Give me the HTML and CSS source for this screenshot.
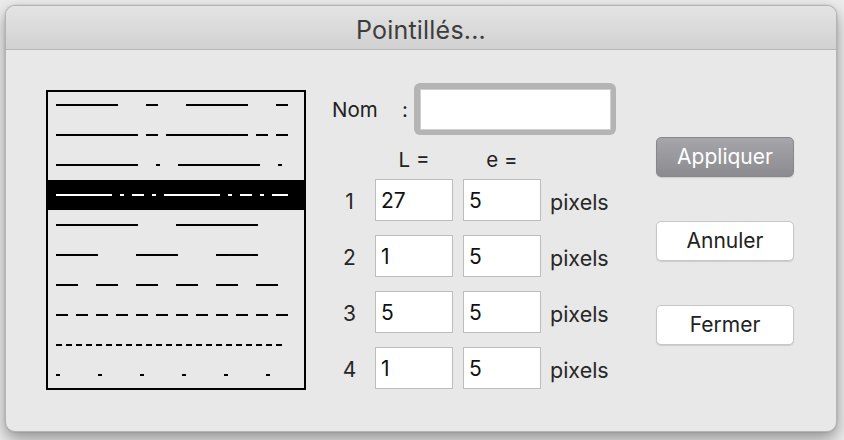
FILE: index.html
```html
<!DOCTYPE html>
<html lang="fr">
<head>
<meta charset="utf-8">
<title>Pointillés</title>
<link rel="stylesheet" href="styles.css">
</head>
<body>
<div class="window">
  <div class="titlebar">Pointillés...</div>
  <div class="content">
    <div class="list">
      <div class="rows">
        <div class="row"><svg class="dash" width="256" height="2"><line x1="9" y1="1" x2="239" y2="1" stroke-dasharray="60 30 10 30"/></svg></div>
        <div class="row"><svg class="dash" width="256" height="2"><line x1="9" y1="1" x2="239" y2="1" stroke-dasharray="80 10 10 10"/></svg></div>
        <div class="row"><svg class="dash" width="256" height="2"><line x1="9" y1="1" x2="239" y2="1" stroke-dasharray="80 20 2 20"/></svg></div>
        <div class="row selected"><svg class="dash" width="256" height="2"><line x1="9" y1="1" x2="239" y2="1" stroke-dasharray="54 10 2 10 10 10 2 10"/></svg></div>
        <div class="row"><svg class="dash" width="256" height="2"><line x1="9" y1="1" x2="239" y2="1" stroke-dasharray="80 40"/></svg></div>
        <div class="row"><svg class="dash" width="256" height="2"><line x1="9" y1="1" x2="239" y2="1" stroke-dasharray="40 40"/></svg></div>
        <div class="row"><svg class="dash" width="256" height="2"><line x1="9" y1="1" x2="239" y2="1" stroke-dasharray="20 20"/></svg></div>
        <div class="row"><svg class="dash" width="256" height="2"><line x1="9" y1="1" x2="239" y2="1" stroke-dasharray="10 10"/></svg></div>
        <div class="row"><svg class="dash" width="256" height="2"><line x1="9" y1="1" x2="239" y2="1" stroke-dasharray="4 6"/></svg></div>
        <div class="row"><svg class="dash" width="256" height="2"><line x1="9" y1="1" x2="239" y2="1" stroke-dasharray="2 40"/></svg></div>
      </div>
    </div>

    <div class="form">
      <div class="nom-row">
        <span class="nom-label">Nom</span><span class="colon">:</span>
        <div class="ring"><div class="nom-field"></div></div>
      </div>
      <div class="hdr-row"><span class="hdr">L =</span><span class="hdr">e =</span></div>
      <div class="grid">
        <span class="num">1</span><div class="field">27</div><div class="field">5</div><span class="unit">pixels</span>
        <span class="num">2</span><div class="field">1</div><div class="field">5</div><span class="unit">pixels</span>
        <span class="num">3</span><div class="field">5</div><div class="field">5</div><span class="unit">pixels</span>
        <span class="num">4</span><div class="field">1</div><div class="field">5</div><span class="unit">pixels</span>
      </div>
    </div>

    <div class="buttons">
      <div class="btn primary">Appliquer</div>
      <div class="btn">Annuler</div>
      <div class="btn">Fermer</div>
    </div>
  </div>
</div>
</body>
</html>
```

FILE: styles.css
```css
* { box-sizing: border-box; }

html, body {
  margin: 0;
  padding: 0;
}

body {
  width: 844px;
  height: 440px;
  background: #ececec;
  font-family: "Inter", "Liberation Sans", sans-serif;
  color: #222;
  overflow: hidden;
}

.window {
  margin: 5px 0 0 5px;
  width: 832px;
  height: 427px;
  border-radius: 10px;
  background: #e8e8e8;
  border: 1px solid #b4b4b4;
  box-shadow: 0 7px 16px rgba(0, 0, 0, 0.38), 0 0 2px rgba(0, 0, 0, 0.18);
  overflow: hidden;
}

.titlebar {
  height: 44px;
  background: linear-gradient(#e4e4e4, #d1d1d1);
  border-bottom: 1px solid #b6b6b6;
  text-align: center;
  font-size: 25px;
  line-height: 48px;
  color: #3d3d3d;
  letter-spacing: 0.2px;
}

.content {
  display: flex;
  align-items: flex-start;
  padding: 33px 0 0 40px;
}

/* list of dash styles */
.list {
  margin-top: 7px;
  width: 260px;
  height: 300px;
  border: 2px solid #000;
  overflow: hidden;
}

.rows {
  margin-top: -2px;
}

.row {
  height: 30px;
  display: flex;
  align-items: center;
}

.dash {
  display: block;
}

.dash line {
  stroke: #000;
  stroke-width: 2;
  stroke-linecap: square;
}

.row.selected {
  background: #000;
}

.row.selected .dash line {
  stroke: #fff;
}

/* form */
.form {
  margin-left: 26px;
  width: 284px;
  font-size: 20.5px;
}

.nom-row {
  display: flex;
  align-items: center;
  height: 52px;
}

.nom-label {
  width: 70px;
  padding-top: 1px;
}

.colon {
  width: 12px;
  padding-top: 1px;
}

.ring {
  width: 202px;
  height: 52px;
  padding: 6px 5px 5px 6px;
  background: #b4b4b4;
  border-radius: 6px;
}

.nom-field {
  width: 100%;
  height: 100%;
  background: #fff;
  border: 1px solid #cfcfcf;
}

.hdr-row {
  display: flex;
  gap: 10px;
  height: 44px;
  padding: 13px 0 0 43px;
  line-height: 24px;
}

.hdr {
  width: 78px;
  text-align: center;
}

.grid {
  display: grid;
  grid-template-columns: 33px 78px 78px auto;
  grid-auto-rows: 42px;
  column-gap: 10px;
  row-gap: 14px;
  align-items: center;
}

.num {
  text-align: center;
  padding-top: 3px;
  padding-left: 2px;
  font-size: 21px;
  color: #262626;
}

.field {
  height: 42px;
  background: #fff;
  border: 1px solid #bdbdbd;
  padding: 2px 0 0 5px;
  line-height: 38px;
  font-size: 21px;
  color: #111;
}

.unit {
  margin-left: -1px;
  padding-top: 3px;
  font-size: 21.5px;
  color: #262626;
}

/* buttons */
.buttons {
  margin-left: 40px;
  padding-top: 54px;
  display: flex;
  flex-direction: column;
  gap: 44px;
}

.btn {
  width: 138px;
  height: 40px;
  border-radius: 5px;
  background: #fff;
  border: 1px solid #c6c6c6;
  box-shadow: 0 1px 1px rgba(0, 0, 0, 0.12);
  text-align: center;
  line-height: 38px;
  font-size: 21px;
  color: #222;
}

.btn.primary {
  background: linear-gradient(#a6a5aa, #8c8b90);
  border-color: #88878c;
  color: #fff;
}
```
